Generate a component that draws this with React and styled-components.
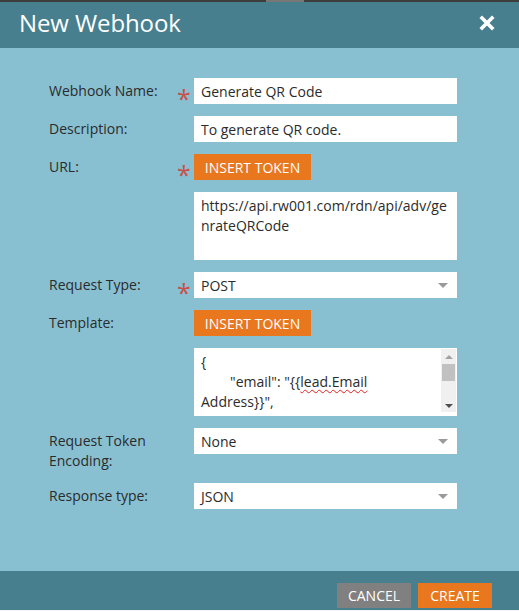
import React from 'react'
import styled, { createGlobalStyle } from 'styled-components'

const colors = {
  header: '#477f8f',
  body: '#88c0d2',
  orange: '#e8771e',
  grey: '#808080',
  text: '#2b2b2b',
  star: '#c8504a',
}

const GlobalStyle = createGlobalStyle`
  html, body {
    margin: 0;
    padding: 0;
    background: #ffffff;
  }
  body {
    font-family: "Open Sans", "Liberation Sans", sans-serif;
    font-size: 14px;
    color: ${colors.text};
  }
`

const Dialog = styled.div`
  width: 519px;
  height: 611px;
  display: flex;
  flex-direction: column;
  background: ${colors.body};
`

const TopStrip = styled.div`
  height: 2px;
  flex: 0 0 2px;
  display: flex;
  background: #3d3d3d;
`

const StripTab = styled.div`
  margin-left: 266px;
  width: 38px;
  background: #777;
`

const Header = styled.div`
  height: 46px;
  flex: 0 0 46px;
  display: flex;
  align-items: center;
  justify-content: space-between;
  padding: 0 24px 0 20px;
  background: ${colors.header};
  color: #fff;
`

const Title = styled.h1`
  margin: 0;
  margin-top: -5px;
  margin-left: -1px;
  font-size: 24px;
  font-weight: 400;
  letter-spacing: -0.1px;
`

const Close = styled.button`
  width: 16px;
  height: 16px;
  padding: 0;
  border: 0;
  margin-top: -5px;
  background: none;
  display: flex;
  cursor: pointer;
`

const Body = styled.div`
  flex: 1;
  padding: 30px 0 0 49px;
`

const Form = styled.div`
  display: grid;
  grid-template-columns: 128px 17px 263px;
  row-gap: 12px;
  align-items: start;
`

const Label = styled.div`
  padding-top: 3px;
  line-height: 20px;
  font-size: 14px;
  color: ${colors.text};
`

const Star = styled.div`
  color: ${colors.star};
  font-size: 25px;
  line-height: 26px;
  height: 26px;
  padding-top: 7px;
  box-sizing: border-box;
  overflow: visible;
`

const Input = styled.div`
  height: 26px;
  box-sizing: border-box;
  background: #fff;
  padding: 4px 7px 2px;
  line-height: 20px;
  white-space: nowrap;
  overflow: hidden;
`

const Select = styled(Input)`
  position: relative;
  &::after {
    content: '';
    position: absolute;
    right: 9px;
    top: 11px;
    border-left: 5px solid transparent;
    border-right: 5px solid transparent;
    border-top: 5px solid #9a9a9a;
  }
`

const TextArea = styled.div`
  height: 68px;
  box-sizing: border-box;
  background: #fff;
  padding: 4px 7px;
  line-height: 20px;
  overflow-wrap: anywhere;
`

const CodeArea = styled.div`
  height: 68px;
  display: flex;
  background: #fff;
  overflow: hidden;
`

const CodeText = styled.div`
  flex: 1;
  padding: 4px 7px 0;
  line-height: 20px;
  white-space: pre;
  overflow: hidden;
`

const Squiggle = styled.span`
  text-decoration: underline wavy #e02020;
  text-decoration-thickness: 1px;
  text-underline-offset: 2px;
`

const Scrollbar = styled.div`
  width: 15px;
  margin: 1px 1px 4px 0;
  background: #f0f0f0;
  display: flex;
  flex-direction: column;
  align-items: center;
  padding: 6px 0 4px;
  box-sizing: border-box;
`

const Arrow = styled.div`
  width: 0;
  height: 0;
  border-left: 4px solid transparent;
  border-right: 4px solid transparent;
  ${p => p.up
    ? `border-bottom: 4px solid #a3a3a3;`
    : `border-top: 4px solid #505050;`}
`

const Thumb = styled.div`
  width: 13px;
  height: 17px;
  background: #c1c1c1;
  margin-top: 5px;
  margin-bottom: auto;
`

const TokenButton = styled.button`
  justify-self: start;
  height: 26px;
  width: 117px;
  padding: 0;
  border: 0;
  background: ${colors.orange};
  color: #fff;
  font-family: inherit;
  font-size: 14px;
  text-transform: uppercase;
  cursor: pointer;
`

const Footer = styled.div`
  height: 40px;
  flex: 0 0 40px;
  display: flex;
  justify-content: flex-end;
  align-items: flex-start;
  gap: 7px;
  padding: 12px 27px 0 0;
  box-sizing: border-box;
  background: ${colors.header};
  border-bottom: 1px solid #f4f4f4;
`

const FooterButton = styled.button`
  height: 25px;
  width: 74px;
  padding: 0;
  border: 0;
  font-family: inherit;
  font-size: 14px;
  color: #fff;
  text-transform: uppercase;
  background: ${p => (p.primary ? colors.orange : colors.grey)};
  cursor: pointer;
`

const CloseIcon = () => (
  <svg width="16" height="16" viewBox="0 0 16 16">
    <path d="M3 3 L13 13 M13 3 L3 13" stroke="#fff" strokeWidth="3.6" strokeLinecap="square" />
  </svg>
)

const Row = ({ label, required, children }) => (
  <>
    <Label>{label}</Label>
    {required ? <Star>*</Star> : <div />}
    {children}
  </>
)

export default function App() {
  return (
    <Dialog>
      <GlobalStyle />
      <TopStrip><StripTab /></TopStrip>
      <Header>
        <Title>New Webhook</Title>
        <Close aria-label="Close"><CloseIcon /></Close>
      </Header>
      <Body>
        <Form>
          <Row label="Webhook Name:" required>
            <Input>Generate QR Code</Input>
          </Row>
          <Row label="Description:">
            <Input>To generate QR code.</Input>
          </Row>
          <Row label="URL:" required>
            <TokenButton>Insert Token</TokenButton>
          </Row>
          <Row label="">
            <TextArea>https://api.rw001.com/rdn/api/adv/genrateQRCode</TextArea>
          </Row>
          <Row label="Request Type:" required>
            <Select>POST</Select>
          </Row>
          <Row label="Template:">
            <TokenButton>Insert Token</TokenButton>
          </Row>
          <Row label="">
            <CodeArea>
              <CodeText>
                {'{\n\t"email": "{{'}<Squiggle>lead.Email</Squiggle>{'\nAddress}}",\n\t"QrCodeInfo": "{{lead.Id}}",'}
              </CodeText>
              <Scrollbar>
                <Arrow up />
                <Thumb />
                <Arrow />
              </Scrollbar>
            </CodeArea>
          </Row>
          <Row label={<>Request Token<br />Encoding:</>}>
            <Select>None</Select>
          </Row>
          <Row label="Response type:">
            <Select>JSON</Select>
          </Row>
        </Form>
      </Body>
      <Footer>
        <FooterButton>Cancel</FooterButton>
        <FooterButton primary>Create</FooterButton>
      </Footer>
    </Dialog>
  )
}
